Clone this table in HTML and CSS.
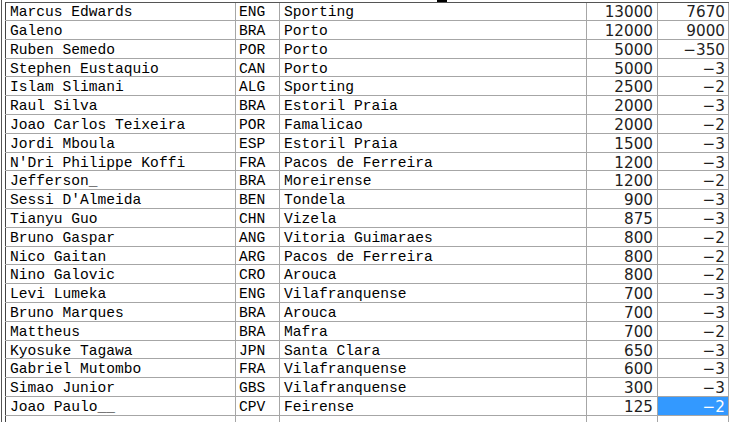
FILE: index.html
```html
<!DOCTYPE html>
<html>
<head>
<meta charset="utf-8">
<link rel="stylesheet" href="styles.css">
</head>
<body>
<div class="sheet">
  <div class="rail"></div>
  <div class="main">
    <div class="cut"><span class="mark"></span></div>
    <div class="grid">
      <div class="row first"><div class="c name">Marcus Edwards</div><div class="c nat">ENG</div><div class="c club">Sporting</div><div class="c num">13000</div><div class="c num last">7670</div></div>
      <div class="row"><div class="c name">Galeno</div><div class="c nat">BRA</div><div class="c club">Porto</div><div class="c num">12000</div><div class="c num last">9000</div></div>
      <div class="row"><div class="c name">Ruben Semedo</div><div class="c nat">POR</div><div class="c club">Porto</div><div class="c num">5000</div><div class="c num last">−350</div></div>
      <div class="row"><div class="c name">Stephen Eustaquio</div><div class="c nat">CAN</div><div class="c club">Porto</div><div class="c num">5000</div><div class="c num last">−3</div></div>
      <div class="row"><div class="c name">Islam Slimani</div><div class="c nat">ALG</div><div class="c club">Sporting</div><div class="c num">2500</div><div class="c num last">−2</div></div>
      <div class="row"><div class="c name">Raul Silva</div><div class="c nat">BRA</div><div class="c club">Estoril Praia</div><div class="c num">2000</div><div class="c num last">−3</div></div>
      <div class="row"><div class="c name">Joao Carlos Teixeira</div><div class="c nat">POR</div><div class="c club">Famalicao</div><div class="c num">2000</div><div class="c num last">−2</div></div>
      <div class="row"><div class="c name">Jordi Mboula</div><div class="c nat">ESP</div><div class="c club">Estoril Praia</div><div class="c num">1500</div><div class="c num last">−3</div></div>
      <div class="row"><div class="c name">N'Dri Philippe Koffi</div><div class="c nat">FRA</div><div class="c club">Pacos de Ferreira</div><div class="c num">1200</div><div class="c num last">−3</div></div>
      <div class="row"><div class="c name">Jefferson_</div><div class="c nat">BRA</div><div class="c club">Moreirense</div><div class="c num">1200</div><div class="c num last">−2</div></div>
      <div class="row"><div class="c name">Sessi D'Almeida</div><div class="c nat">BEN</div><div class="c club">Tondela</div><div class="c num">900</div><div class="c num last">−3</div></div>
      <div class="row"><div class="c name">Tianyu Guo</div><div class="c nat">CHN</div><div class="c club">Vizela</div><div class="c num">875</div><div class="c num last">−3</div></div>
      <div class="row"><div class="c name">Bruno Gaspar</div><div class="c nat">ANG</div><div class="c club">Vitoria Guimaraes</div><div class="c num">800</div><div class="c num last">−2</div></div>
      <div class="row"><div class="c name">Nico Gaitan</div><div class="c nat">ARG</div><div class="c club">Pacos de Ferreira</div><div class="c num">800</div><div class="c num last">−2</div></div>
      <div class="row"><div class="c name">Nino Galovic</div><div class="c nat">CRO</div><div class="c club">Arouca</div><div class="c num">800</div><div class="c num last">−2</div></div>
      <div class="row"><div class="c name">Levi Lumeka</div><div class="c nat">ENG</div><div class="c club">Vilafranquense</div><div class="c num">700</div><div class="c num last">−3</div></div>
      <div class="row"><div class="c name">Bruno Marques</div><div class="c nat">BRA</div><div class="c club">Arouca</div><div class="c num">700</div><div class="c num last">−3</div></div>
      <div class="row"><div class="c name">Mattheus</div><div class="c nat">BRA</div><div class="c club">Mafra</div><div class="c num">700</div><div class="c num last">−2</div></div>
      <div class="row"><div class="c name">Kyosuke Tagawa</div><div class="c nat">JPN</div><div class="c club">Santa Clara</div><div class="c num">650</div><div class="c num last">−3</div></div>
      <div class="row"><div class="c name">Gabriel Mutombo</div><div class="c nat">FRA</div><div class="c club">Vilafranquense</div><div class="c num">600</div><div class="c num last">−3</div></div>
      <div class="row"><div class="c name">Simao Junior</div><div class="c nat">GBS</div><div class="c club">Vilafranquense</div><div class="c num">300</div><div class="c num last">−3</div></div>
      <div class="row"><div class="c name">Joao Paulo__</div><div class="c nat">CPV</div><div class="c club">Feirense</div><div class="c num">125</div><div class="c num last sel">−2</div></div>
      <div class="row"><div class="c name"></div><div class="c nat"></div><div class="c club"></div><div class="c num"></div><div class="c num last"></div></div>
    </div>
  </div>
</div>
</body>
</html>
```
FILE: styles.css
```css
html, body {
  margin: 0;
  padding: 0;
  background: #ffffff;
  overflow: hidden;
}
.sheet {
  display: flex;
  padding-left: 1px;
  height: 422px;
}
.rail {
  width: 1px;
  background: #555555;
  margin-right: 3px;
}
.main {
  display: flex;
  flex-direction: column;
}
.cut {
  height: 2px;
  display: flex;
}
.mark {
  margin-left: 432px;
  width: 10px;
  height: 2px;
  background: #000000;
}
.grid {
  border-left: 1px solid #444444;
  border-top: 1px solid #555555;
}
.row {
  display: grid;
  grid-template-columns: 230px 44px 307px 71px 72px;
  height: 18.8px;
  box-sizing: border-box;
  border-bottom: 1px solid #a6a6a6;
  margin-left: -1px;
}
.row.first {
  height: 18px;
}
.c {
  box-sizing: border-box;
  border-left: 1px solid #a6a6a6;
  font-family: "Courier New", Courier, "Nimbus Mono PS", "Nimbus Mono L", FreeMono, "Liberation Mono", monospace;
  font-size: 14.6px;
  line-height: 15px;
  padding-top: 3px;
  color: #000000;
  white-space: nowrap;
  overflow: hidden;
}
.first .c {
  padding-top: 2px;
}
.name {
  border-left-color: #444444;
  padding-left: 4px;
}
.nat {
  padding-left: 3px;
}
.club {
  padding-left: 4px;
}
.num {
  font-family: "DejaVu Sans", Verdana, sans-serif;
  font-size: 15.2px;
  color: #1e1e1e;
  text-align: right;
  padding-right: 4px;
}
.num.last {
  border-right: 1px solid #a6a6a6;
  padding-right: 3px;
}
.sel {
  background: #3399ff;
  color: #ffffff;
}
```
